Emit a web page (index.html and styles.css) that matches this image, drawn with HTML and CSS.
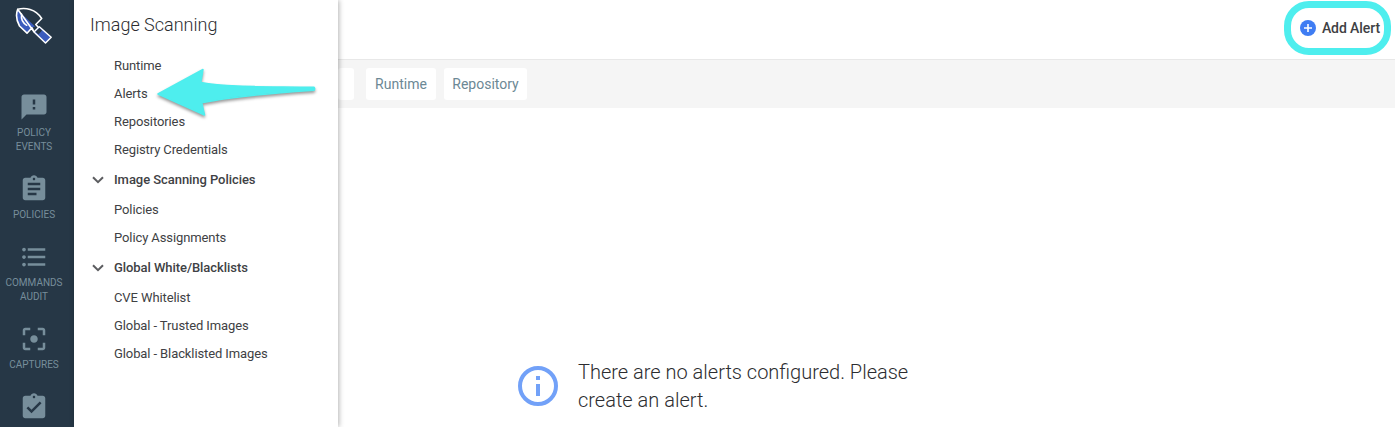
FILE: index.html
```html
<!DOCTYPE html>
<html lang="en">
<head>
<meta charset="utf-8">
<title>Image Scanning - Alerts</title>
<link rel="stylesheet" href="styles.css">
</head>
<body>
<div class="app">
  <nav class="rail">
    <svg class="logo" width="40" height="40" viewBox="0 0 40 40">
      <path d="M3.700 4L21 20.500L18 21.500L13 27L5.500 20C3 15 2 9 3.700 4Z" fill="#3a5bbd"/>
      <path d="M3.700 3.200C11 1.500 21.500 2.500 27.700 12.500L21.800 18.500L24.300 21.200M19.800 25.500L18 21.800L13 27.200L5.500 20C2.500 14.500 1.800 8 3.700 3.200Z" fill="none" stroke="#fff" stroke-width="1.600" stroke-linejoin="round"/>
      <path d="M7.500 8C6.800 13 9 17 12.700 19.300" fill="none" stroke="#fff" stroke-width="1.500" stroke-linecap="round"/>
      <path d="M25.300 20.800L37.200 31.200L31.500 37L20 26Z" fill="#3a5bbd" stroke="#fff" stroke-width="1.500" stroke-linejoin="round"/>
      <path d="M25.300 22L28 24.400L24.500 28.500L21.500 25.800Z" fill="#263746"/>
    </svg>
    <a class="rail-item"><svg class="rail-icon" viewBox="0 0 24 24"><path d="M20 2H4c-1.100 0-1.990.9-1.990 2L2 22l4-4h14c1.100 0 2-.9 2-2V4c0-1.100-.9-2-2-2zm-7 12h-2v-2h2v2zm0-4h-2V6h2v4z"/></svg><span>POLICY<br>EVENTS</span></a>
    <a class="rail-item"><svg class="rail-icon" viewBox="0 0 24 24"><path d="M19 3h-4.180C14.400 1.840 13.300 1 12 1c-1.300 0-2.400.84-2.820 2H5c-1.100 0-2 .9-2 2v14c0 1.100.9 2 2 2h14c1.100 0 2-.9 2-2V5c0-1.100-.9-2-2-2zm-7 0c.55 0 1 .45 1 1s-.45 1-1 1-1-.45-1-1 .45-1 1-1zm2 14H7v-2h7v2zm3-4H7v-2h10v2zm0-4H7V7h10v2z"/></svg><span>POLICIES</span></a>
    <a class="rail-item"><svg class="rail-icon" viewBox="0 0 24 24"><path d="M4 10.500c-.83 0-1.500.67-1.500 1.500s.67 1.500 1.500 1.500 1.500-.67 1.500-1.500-.67-1.500-1.500-1.500zm0-6c-.83 0-1.500.67-1.500 1.500S3.170 7.500 4 7.500 5.500 6.830 5.500 6 4.830 4.500 4 4.500zm0 12c-.83 0-1.500.68-1.500 1.500s.68 1.500 1.500 1.500 1.500-.68 1.500-1.500-.67-1.500-1.500-1.500zM7 19h14v-2H7v2zm0-6h14v-2H7v2zm0-8v2h14V5H7z"/></svg><span>COMMANDS<br>AUDIT</span></a>
    <a class="rail-item"><svg class="rail-icon" viewBox="0 0 24 24"><path d="M12 9c-1.660 0-3 1.340-3 3s1.340 3 3 3 3-1.340 3-3-1.340-3-3-3zm-7 6H3v4c0 1.100.9 2 2 2h4v-2H5v-4zM5 5h4V3H5c-1.100 0-2 .9-2 2v4h2V5zm14-2h-4v2h4v4h2V5c0-1.100-.9-2-2-2zm0 16h-4v2h4c1.100 0 2-.9 2-2v-4h-2v4z"/></svg><span>CAPTURES</span></a>
    <a class="rail-item"><svg class="rail-icon" viewBox="0 0 24 24"><path d="M19 3h-4.180C14.400 1.840 13.300 1 12 1c-1.300 0-2.400.84-2.820 2H5c-1.100 0-2 .9-2 2v14c0 1.100.9 2 2 2h14c1.100 0 2-.9 2-2V5c0-1.100-.9-2-2-2zm-7 0c.55 0 1 .45 1 1s-.45 1-1 1-1-.45-1-1 .45-1 1-1zm-2 14l-4-4 1.410-1.410L10 14.170l6.590-6.590L18 9l-8 8z"/></svg></a>
  </nav>

  <aside class="menu">
    <h1 class="menu-title">Image Scanning</h1>
    <a class="menu-item">Runtime</a>
    <a class="menu-item">Alerts</a>
    <a class="menu-item">Repositories</a>
    <a class="menu-item">Registry Credentials</a>
    <div class="menu-group"><svg class="chevron" viewBox="0 0 12 8"><path d="M1 1.200L6 6.200L11 1.200"/></svg>Image Scanning Policies</div>
    <a class="menu-item">Policies</a>
    <a class="menu-item">Policy Assignments</a>
    <div class="menu-group"><svg class="chevron" viewBox="0 0 12 8"><path d="M1 1.200L6 6.200L11 1.200"/></svg>Global White/Blacklists</div>
    <a class="menu-item">CVE Whitelist</a>
    <a class="menu-item">Global - Trusted Images</a>
    <a class="menu-item">Global - Blacklisted Images</a>
  </aside>

  <main class="content">
    <header class="topbar">
      <button class="add-alert">
        <svg class="plus" viewBox="0 0 16 16"><circle cx="8" cy="8" r="8"/><path d="M8 4V12M4 8H12"/></svg>
        Add Alert
      </button>
    </header>
    <div class="filters">
      <span class="chip chip-first"></span>
      <span class="chip chip-runtime">Runtime</span>
      <span class="chip chip-repository">Repository</span>
    </div>
    <section class="empty">
      <svg class="info" viewBox="0 0 40 40"><circle cx="20" cy="20" r="18"/><path d="M20 10V14M20 18V30"/></svg>
      <p class="empty-text">There are no alerts configured. Please<br>create an alert.</p>
    </section>
  </main>

  <svg class="arrow" width="172" height="60" viewBox="0 0 172 60">
    <path d="M5 30L50 5.500L47.800 18.600C75 23.500 115 22.500 161 23.300Q162.300 24.600 161 26.200C120 29 80 32 48.800 38.800L51.500 51Z"/>
  </svg>
  <div class="ring"></div>
</div>
</body>
</html>
```

FILE: styles.css
```css
* { box-sizing: border-box; }
body {
  margin: 0;
  background: #fff;
  font-family: Roboto, "Liberation Sans", sans-serif;
  color: #404144;
}
.app {
  position: relative;
  display: flex;
  width: 1395px;
  height: 427px;
  overflow: hidden;
}
.rail {
  display: flex;
  flex: none;
  flex-direction: column;
  align-items: center;
  gap: 20px;
  width: 74px;
  height: 427px;
  padding: 6px 6px 0 0;
  overflow: hidden;
  background: #263746;
}
.logo { flex: none; margin-bottom: 26px; }
.rail-item {
  display: flex;
  flex: none;
  flex-direction: column;
  align-items: center;
  gap: 4px;
  font-size: 10px;
  line-height: 14px;
  text-align: center;
  color: #778e9b;
}
.rail-icon { width: 30px; height: 30px; fill: #778e9b; }
.menu {
  z-index: 1;
  flex: none;
  width: 264px;
  height: 427px;
  background: #fff;
  box-shadow: 1px 0 5px rgba(0, 0, 0, 0.3);
}
.menu-title {
  height: 52px;
  margin: 0;
  padding: 13px 0 0 16px;
  font-size: 18px;
  font-weight: 300;
  line-height: 24px;
  color: #2c2d30;
}
.menu-item {
  display: block;
  padding-left: 40px;
  font-size: 13px;
  letter-spacing: -0.1px;
  line-height: 28px;
}
.menu-group {
  display: flex;
  align-items: center;
  gap: 10px;
  height: 32px;
  padding: 0 0 1px 18px;
  font-size: 13px;
  font-weight: 500;
  letter-spacing: -0.06px;
  line-height: 15px;
}
.chevron {
  width: 12px;
  height: 8px;
  fill: none;
  stroke: #5c5d60;
  stroke-width: 2;
}
.content { flex: 1; }
.topbar {
  display: flex;
  justify-content: flex-end;
  height: 59px;
  padding: 18px 15px 0 0;
}
.add-alert {
  display: flex;
  align-items: center;
  gap: 6px;
  height: 20px;
  padding: 0;
  border: 0;
  background: none;
  font: 500 14px/20px Roboto, sans-serif;
  letter-spacing: -0.08px;
  color: #404144;
}
.plus { width: 16px; height: 16px; fill: #3f7df3; }
.plus path { stroke: #fff; stroke-width: 1.600; }
.filters {
  display: flex;
  gap: 8px;
  height: 49px;
  padding-top: 8px;
  border-top: 1px solid #e8e8e8;
  background: #f5f5f5;
}
.chip {
  height: 32px;
  border-radius: 3px;
  background: #fff;
  font-size: 14px;
  line-height: 32px;
  text-align: center;
  color: #6c8895;
}
.chip-first { width: 16px; margin-right: 4px; }
.chip-runtime { width: 70px; }
.chip-repository { width: 83px; }
.empty {
  display: flex;
  align-items: center;
  gap: 20px;
  padding: 250px 0 0 180px;
}
.info {
  width: 40px;
  height: 40px;
  fill: none;
  stroke: #72a1f8;
  stroke-width: 4;
}
.empty-text {
  margin: 0;
  font-size: 20px;
  font-weight: 300;
  line-height: 28px;
  color: #2c2d30;
}
/* Callouts drawn over the interface */
.arrow {
  position: absolute;
  z-index: 2;
  top: 64px;
  left: 153px;
  fill: #4eeeee;
  stroke: #4eeeee;
  stroke-width: 1.500;
  stroke-linejoin: round;
  filter: drop-shadow(0 2px 1.500px rgba(0, 0, 0, 0.4));
}
.ring {
  position: absolute;
  z-index: 2;
  top: 1px;
  left: 1284px;
  width: 107px;
  height: 54px;
  border: 7px solid #4eeeee;
  border-radius: 25px;
  pointer-events: none;
}
```
